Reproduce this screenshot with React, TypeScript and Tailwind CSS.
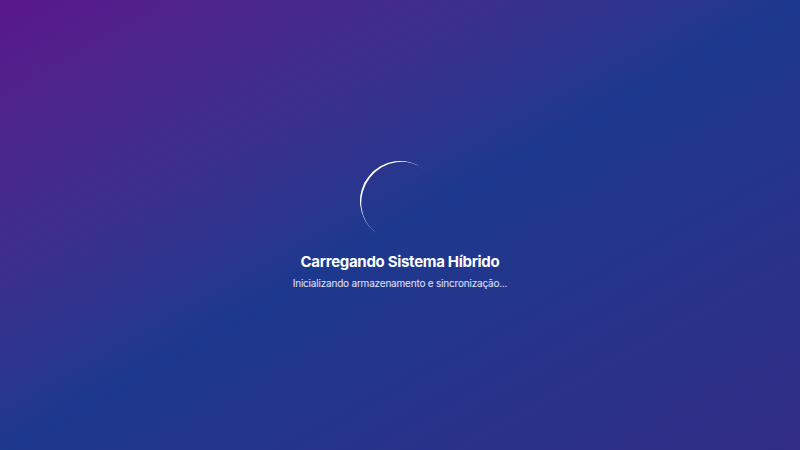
import React from "react";

const App = () => {
  return (
    <div className="min-h-screen w-full flex items-center justify-center bg-gradient-to-br from-purple-900 via-blue-900 to-indigo-900 font-['Inter','Noto_Sans',sans-serif]">
      <div className="text-center">
        <div className="h-20 w-20 rounded-full border-b-2 border-white mx-auto mb-[11px] rotate-[128deg]"></div>
        <h2 className="text-[15px] leading-5 font-bold tracking-[-0.3px] text-white">
          Carregando Sistema Híbrido
        </h2>
        <p className="mt-1 text-[10px] leading-[14px] tracking-[-0.2px] text-indigo-100">
          Inicializando armazenamento e sincronização...
        </p>
      </div>
    </div>
  );
};

export default App;
